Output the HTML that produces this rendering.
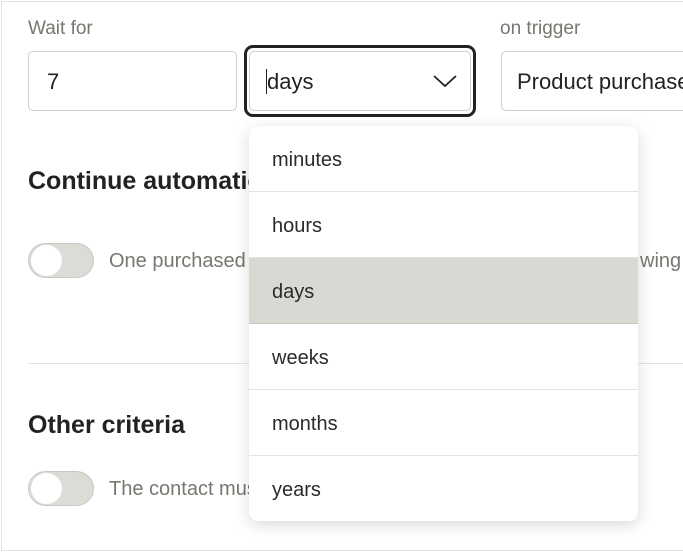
<!DOCTYPE html>
<html><head><style>
*{box-sizing:border-box;margin:0;padding:0}
body{width:683px;height:552px;background:#fff;font-family:"Liberation Sans",sans-serif;position:relative;overflow:hidden}
.frame{position:absolute;left:1px;top:1px;width:683px;height:550px;border:1px solid #e6e4df}
.abs{position:absolute;white-space:nowrap}
.lbl{color:#77766f;font-size:19px}
.inp{position:absolute;border:1px solid #cfcfcf;border-radius:5px;background:#fff;font-size:22px;color:#222}
.h{font-size:25px;font-weight:bold;color:#222}
.tog{position:absolute;width:66px;height:35px;border-radius:18px;background:#dcdcd7;border:1px solid #c9c9c4}
.tog::after{content:"";position:absolute;left:2px;top:1px;width:31px;height:31px;border-radius:50%;background:#fff}
.gt{color:#77766f;font-size:20px}
.dd{position:absolute;left:249px;top:126px;width:389px;height:395px;background:#fff;border-radius:9px;box-shadow:0 4px 16px rgba(0,0,0,.15);overflow:hidden}
.it{height:66px;border-bottom:1px solid #e2e2e2;padding-left:23px;line-height:68px;font-size:20px;color:#2a2a2a}
.it:last-child{border-bottom:none}
</style></head><body>
<div class="frame"></div>
<div class="abs lbl" style="left:28px;top:18px">Wait for</div>
<div class="abs lbl" style="left:500px;top:18px">on trigger</div>
<div class="inp" style="left:28px;top:51px;width:209px;height:60px;padding:17px 0 0 18px">7</div>
<div class="abs" style="left:244px;top:45px;width:232px;height:72px;border:3px solid #222;border-radius:9px"></div>
<div class="inp" style="left:249px;top:51px;width:222px;height:60px;padding:17px 0 0 16px"><span style="border-left:1.5px solid #222">days</span>
<svg style="position:absolute;left:182px;top:21px" width="26" height="16"><path d="M2 3 L13 13 L24 3" fill="none" stroke="#222" stroke-width="1.8"/></svg></div>
<div class="inp" style="left:501px;top:51px;width:240px;height:60px;padding:17px 0 0 15px;overflow:hidden">Product purchased</div>
<div class="abs h" style="left:28px;top:167px">Continue automation</div>
<div class="tog" style="left:28px;top:243px"></div>
<div class="abs gt" style="left:109px;top:250px">One purchased product</div>
<div class="abs gt" style="left:640px;top:250px;overflow:hidden;width:43px">wing</div>
<div class="abs" style="left:28px;top:363px;width:655px;height:1px;background:#e4e4e4"></div>
<div class="abs h" style="left:28px;top:411px">Other criteria</div>
<div class="tog" style="left:28px;top:471px"></div>
<div class="abs gt" style="left:109px;top:478px">The contact must</div>
<div class="dd">
<div class="it">minutes</div>
<div class="it">hours</div>
<div class="it" style="background:#d9d9d4;border-bottom-color:#c8c8c3">days</div>
<div class="it">weeks</div>
<div class="it">months</div>
<div class="it">years</div>
</div>
</body></html>
